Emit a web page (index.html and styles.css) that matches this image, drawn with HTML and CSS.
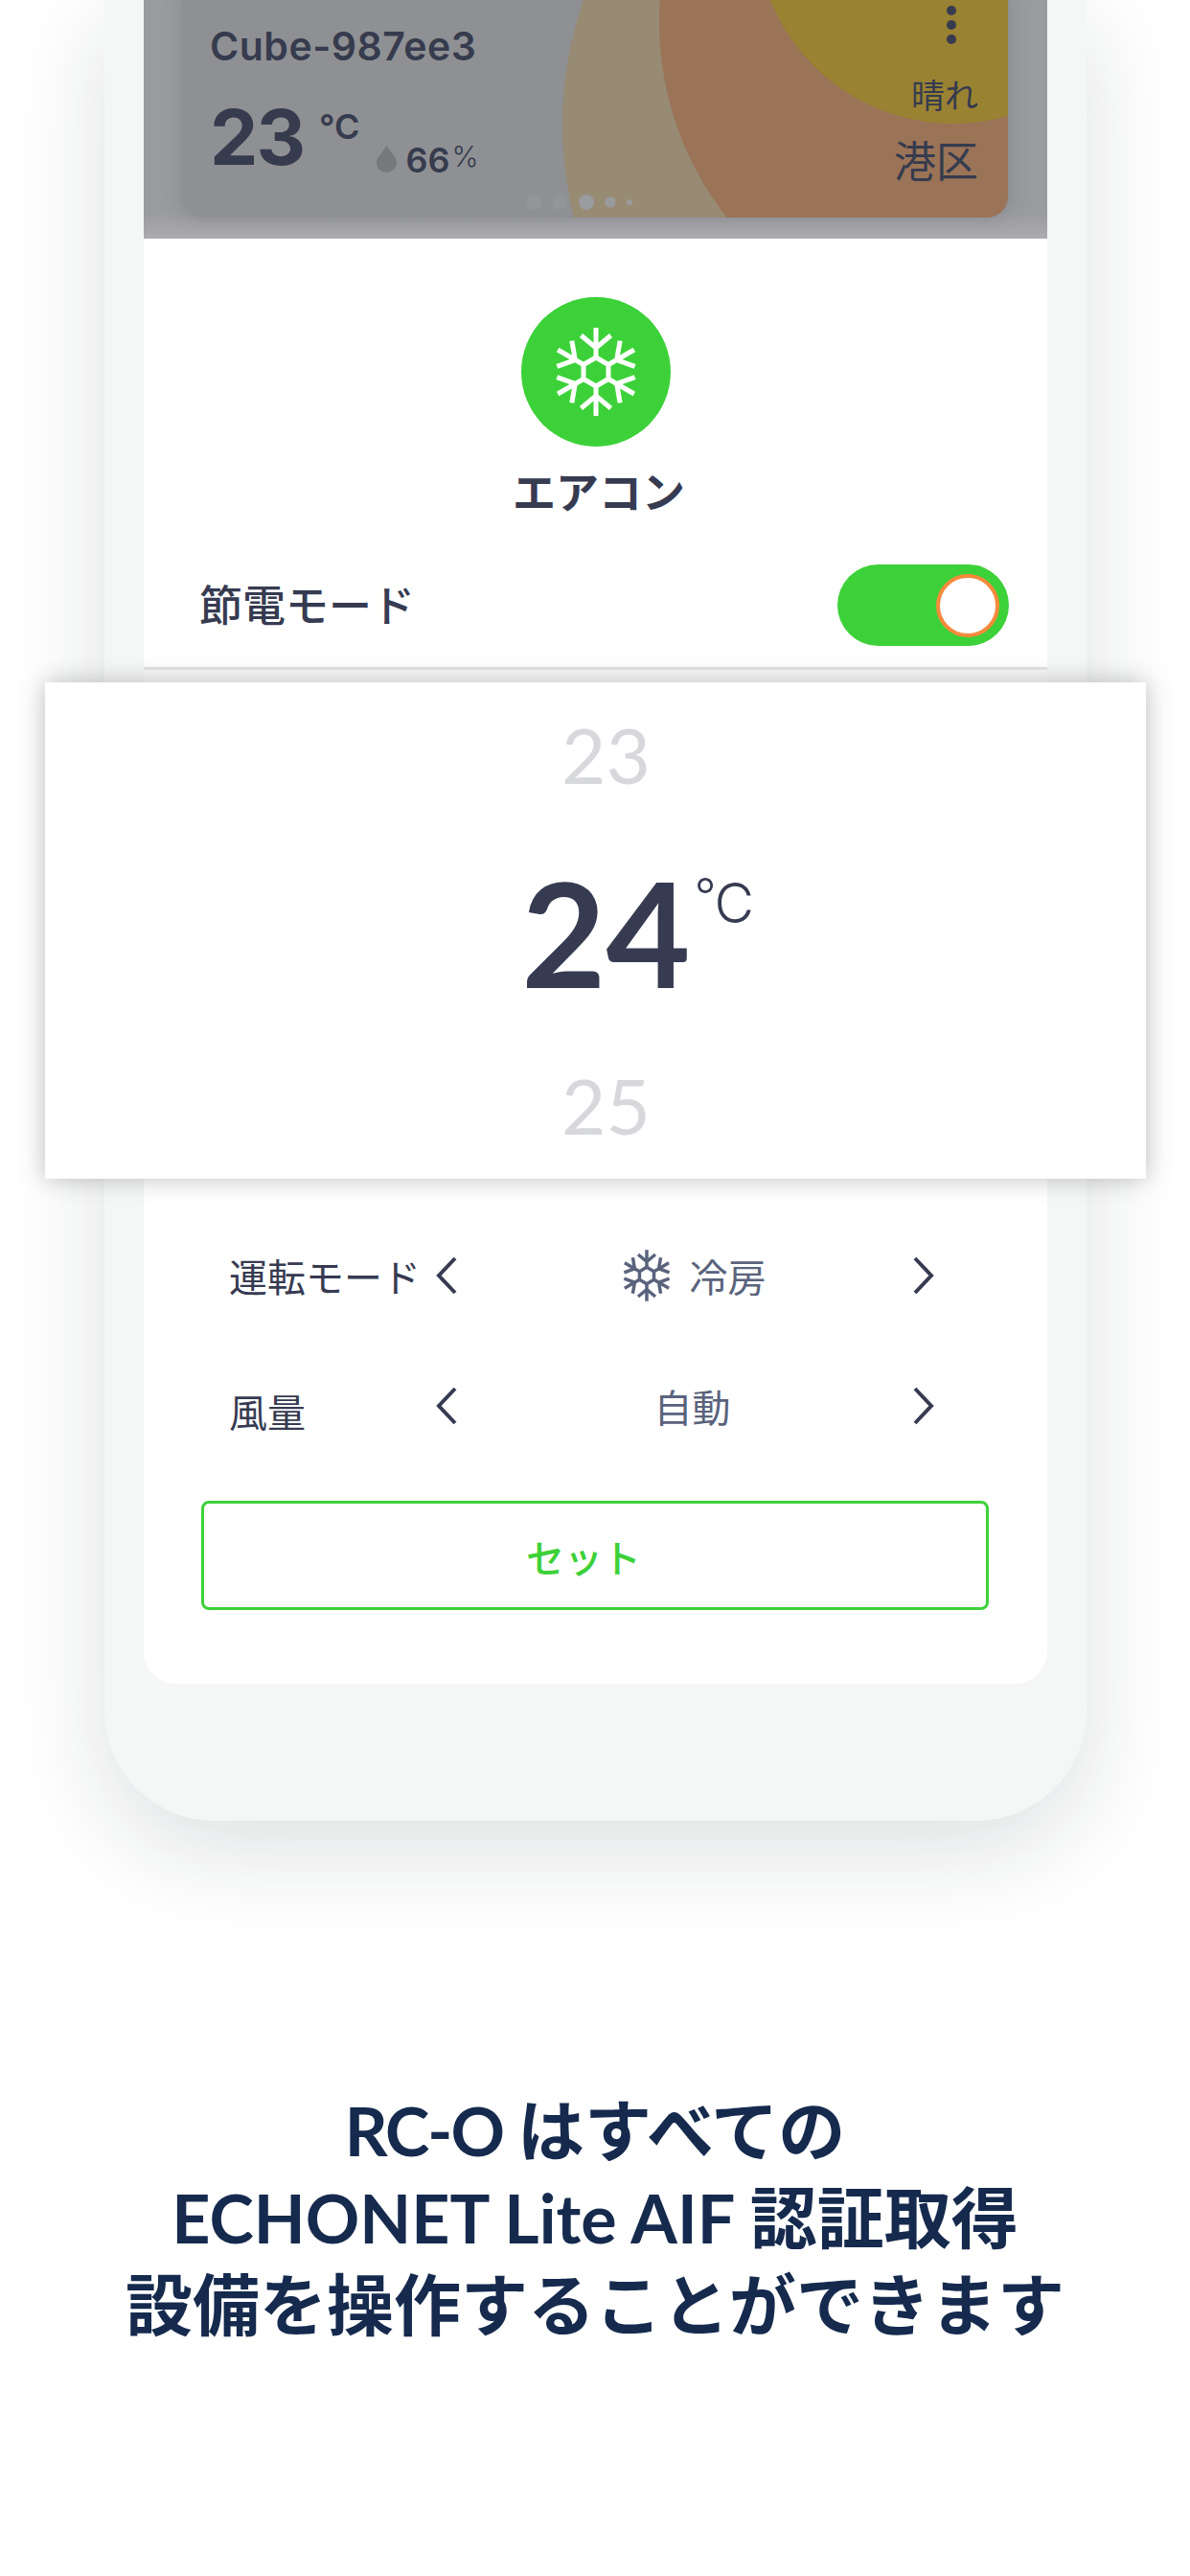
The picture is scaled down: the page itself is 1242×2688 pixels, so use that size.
FILE: index.html
```html
<!DOCTYPE html>
<html lang="ja">
<head>
    <meta charset="UTF-8">
    <meta name="viewport" content="width=device-width, initial-scale=1.0">
    <title>RC-O エアコン</title>
    <link rel="stylesheet" href="styles.css">
</head>
<body>
    <!-- snowflake shared by the header and the mode row -->
    <svg class="defs" width="0" height="0">
        <defs>
            <g id="arm">
                <path d="M0 -15V-46M-15.5 -38L0 -25L15.5 -38"/>
            </g>
            <symbol id="snowflake" viewBox="-50 -50 100 100">
                <path d="M0 -15L13 -7.5V7.5L0 15L-13 7.5V-7.5Z"/>
                <use href="#arm"/>
                <use href="#arm" transform="rotate(60)"/>
                <use href="#arm" transform="rotate(120)"/>
                <use href="#arm" transform="rotate(180)"/>
                <use href="#arm" transform="rotate(240)"/>
                <use href="#arm" transform="rotate(300)"/>
            </symbol>
        </defs>
    </svg>

    <div class="phone">
        <div class="screen">
            <div class="backdrop">
                <div class="card">
                    <svg class="sun" viewBox="190 0 862 227">
                        <circle cx="985" cy="130" r="398" fill="#978b74"/>
                        <circle cx="1018" cy="23" r="330" fill="#9b7357"/>
                        <circle cx="995" cy="-77" r="206" fill="#998232"/>
                        <g fill="#9a9b9f">
                            <circle cx="557" cy="211" r="8" fill="#949598"/>
                            <circle cx="584" cy="211" r="8" fill="#949598"/>
                            <circle cx="612" cy="211" r="8"/>
                            <circle cx="637" cy="211" r="5.5"/>
                            <circle cx="657" cy="211" r="3"/>
                        </g>
                    </svg>
                    <div class="card-left">
                        <div class="device-name">Cube-987ee3</div>
                        <div class="readings">
                            <span class="temp">23</span>
                            <span class="temp-unit">°C</span>
                            <svg class="drop" viewBox="0 0 21 28"><path d="M10.500 0C13 6 21 11 21 18A10.500 10 0 0 1 0 18C0 11 8 6 10.500 0Z" fill="#77787b"/></svg>
                            <span class="humidity">66</span>
                            <span class="humidity-unit">%</span>
                        </div>
                    </div>
                    <div class="card-right">
                        <svg class="menu" viewBox="0 0 10 40" fill="#363b4e">
                            <circle cx="5" cy="5" r="5"/>
                            <circle cx="5" cy="20" r="5"/>
                            <circle cx="5" cy="35" r="5"/>
                        </svg>
                        <div class="weather">晴れ</div>
                        <div class="area">港区</div>
                    </div>
                </div>
            </div>

            <div class="sheet">
                <div class="round-icon">
                    <svg class="snow-big"><use href="#snowflake"/></svg>
                </div>
                <div class="title">エアコン</div>

                <div class="eco">
                    <span class="eco-label">節電モード</span>
                    <div class="toggle"><div class="knob"></div></div>
                </div>
                <div class="divider"></div>

                <div class="picker">
                    <div class="near">23</div>
                    <div class="current">
                        <span class="value">24</span>
                        <span class="unit"><span class="deg">°</span>C</span>
                    </div>
                    <div class="near">25</div>
                </div>

                <div class="option">
                    <span class="label">運転モード</span>
                    <svg class="chevron" viewBox="0 0 22 40"><path d="M20 2L3 20L20 38"/></svg>
                    <div class="choice">
                        <svg class="snow-small"><use href="#snowflake"/></svg>
                        <span>冷房</span>
                    </div>
                    <svg class="chevron" viewBox="0 0 22 40"><path d="M2 2L19 20L2 38"/></svg>
                </div>
                <div class="option fan">
                    <span class="label">風量</span>
                    <svg class="chevron" viewBox="0 0 22 40"><path d="M20 2L3 20L20 38"/></svg>
                    <div class="choice"><span>自動</span></div>
                    <svg class="chevron" viewBox="0 0 22 40"><path d="M2 2L19 20L2 38"/></svg>
                </div>

                <button class="set-btn">セット</button>
            </div>
        </div>
    </div>

    <div class="caption">
        <span class="product">RC-O </span>はすべての<br>
        ECHONET Lite AIF 認証取得<br>
        設備を操作することができます
    </div>
</body>
</html>
```
FILE: styles.css
```css
* {
    box-sizing: border-box;
}

body {
    margin: 0;
    width: 1242px;
    height: 2688px;
    overflow: hidden;
    background-color: #fff;
    font-family: "Noto Sans CJK JP", sans-serif;
    color: #363b51;
}

svg {
    display: block;
    flex-shrink: 0;
}

.defs {
    position: absolute;
}

.phone {
    width: 1025px;
    height: 1900px;
    margin-left: 109px;
    padding: 0 41px;
    background-color: #f5f7f6;
    border-radius: 0 0 115px 115px;
    box-shadow: 0 30px 100px rgba(20, 35, 40, 0.14);
}

.screen {
    height: 1757px;
    background-color: #fff;
    border-radius: 0 0 34px 34px;
}

/* dimmed dashboard behind the sheet */
.backdrop {
    height: 249px;
    padding: 0 40px;
    background: linear-gradient(#9a9b9f 0, #9a9b9f 222px, #abaaaf 248px);
    overflow: hidden;
}

.card {
    position: relative;
    display: flex;
    justify-content: space-between;
    height: 227px;
    padding: 0 32px 0 29px;
    background-color: #8f9093;
    border-radius: 0 0 22px 22px;
    box-shadow: 0 0 18px rgba(100, 102, 110, 0.35);
    font-family: Inter, sans-serif;
    font-weight: 600;
    color: #363b4e;
}

.sun {
    position: absolute;
    inset: 0;
    width: 862px;
    height: 227px;
    border-radius: 0 0 22px 22px;
}

.card-left, .card-right {
    position: relative;
}

.device-name {
    margin-top: 28px;
    font-size: 41px;
    line-height: 40px;
    letter-spacing: 0.5px;
}

.readings {
    display: flex;
    align-items: flex-start;
    margin-top: 35px;
    line-height: 80px;
}

.temp {
    font-size: 80px;
    font-weight: 700;
    letter-spacing: -2px;
}

.temp-unit {
    margin: -11px 0 0 16px;
    font-size: 36px;
}

.drop {
    width: 21px;
    height: 28px;
    margin: 49px 0 0 17px;
}

.humidity {
    margin: 24px 0 0 10px;
    font-size: 36px;
}

.humidity-unit {
    margin: 20px 0 0 2px;
    font-size: 30px;
    font-weight: 300;
}

.card-right {
    display: flex;
    flex-direction: column;
    align-items: flex-end;
    padding-top: 6px;
    font-family: "Noto Sans CJK JP", sans-serif;
    font-weight: 400;
}

.menu {
    width: 10px;
    height: 40px;
    margin-right: 23px;
}

.weather {
    margin-top: 32px;
    font-size: 35px;
    line-height: 40px;
}

.area {
    margin-top: 23px;
    font-size: 44px;
    line-height: 50px;
}

.sheet {
    padding-top: 61px;
}

.round-icon {
    display: flex;
    align-items: center;
    justify-content: center;
    width: 156px;
    height: 156px;
    margin: 0 auto;
    border-radius: 50%;
    background-color: #3dd139;
}

.snow-big {
    width: 100px;
    height: 100px;
    fill: none;
    stroke: #fff;
    stroke-width: 5;
}

.title {
    margin: 21px 0 52px 7px;
    font-size: 45px;
    line-height: 50px;
    font-weight: 700;
    text-align: center;
}

.eco {
    display: flex;
    align-items: center;
    justify-content: space-between;
    height: 85px;
    padding: 0 40px 0 58px;
    font-size: 45px;
    font-weight: 500;
}

.eco-label {
    padding-bottom: 4px;
}

.toggle {
    display: flex;
    align-items: center;
    justify-content: flex-end;
    width: 179px;
    height: 85px;
    padding-right: 10px;
    border-radius: 43px;
    background-color: #3dd139;
}

.knob {
    width: 66px;
    height: 66px;
    border: 4px solid #f58a3c;
    border-radius: 50%;
    background-color: #fff;
}

.divider {
    height: 16px;
    margin-top: 22px;
    border-top: 3px solid #e3e3e3;
    background-color: #f9f9f9;
}

/* temperature wheel, wider than the phone */
.picker {
    position: relative;
    height: 518px;
    margin: 0 -103px;
    padding: 35px 0 0 22px;
    background-color: #fff;
    box-shadow: 0 0 24px rgba(0, 0, 0, 0.25);
    font-family: Lato, sans-serif;
    text-align: center;
}

.near {
    font-size: 80px;
    line-height: 80px;
    color: #d7d8dc;
}

.current {
    display: grid;
    grid-template-columns: 1fr auto 1fr;
    margin: 70px 0 66px;
    line-height: 150px;
}

.value {
    grid-column: 2;
    font-size: 152px;
    font-weight: 700;
}

.unit {
    margin: -29px 0 0 4px;
    font-family: Inter, sans-serif;
    font-size: 57px;
    font-weight: 300;
    letter-spacing: -2px;
    text-align: left;
}

.deg {
    font-size: 50px;
    line-height: 1;
    vertical-align: 10px;
}

.option {
    display: grid;
    grid-template-columns: 216px 22px 1fr 22px;
    grid-template-rows: 60px;
    align-items: center;
    height: 60px;
    margin-top: 71px;
    padding: 0 118px 0 89px;
    font-size: 40px;
    line-height: 60px;
}

.fan {
    margin-top: 76px;
}

.fan .label {
    padding-top: 10px;
}

.chevron {
    width: 22px;
    height: 40px;
    fill: none;
    stroke: #363b51;
    stroke-width: 4;
}

.choice {
    display: flex;
    align-items: center;
    justify-content: center;
    gap: 16px;
    padding-left: 15px;
    color: #5a637c;
}

.snow-small {
    width: 58px;
    height: 58px;
    fill: none;
    stroke: #5a637c;
    stroke-width: 6;
}

.set-btn {
    display: block;
    width: 822px;
    height: 114px;
    margin: 69px 0 0 60px;
    padding: 2px 24px 0 0;
    border: 3px solid #3dd139;
    border-radius: 8px;
    background-color: #fff;
    font-family: inherit;
    font-size: 40px;
    font-weight: 500;
    color: #3dd139;
}

.caption {
    margin-top: 278px;
    font-family: Lato, "Noto Sans CJK JP", sans-serif;
    font-size: 70px;
    font-weight: 700;
    line-height: 91px;
    text-align: center;
    color: #152a4d;
}

.product {
    letter-spacing: -2px;
}
```
